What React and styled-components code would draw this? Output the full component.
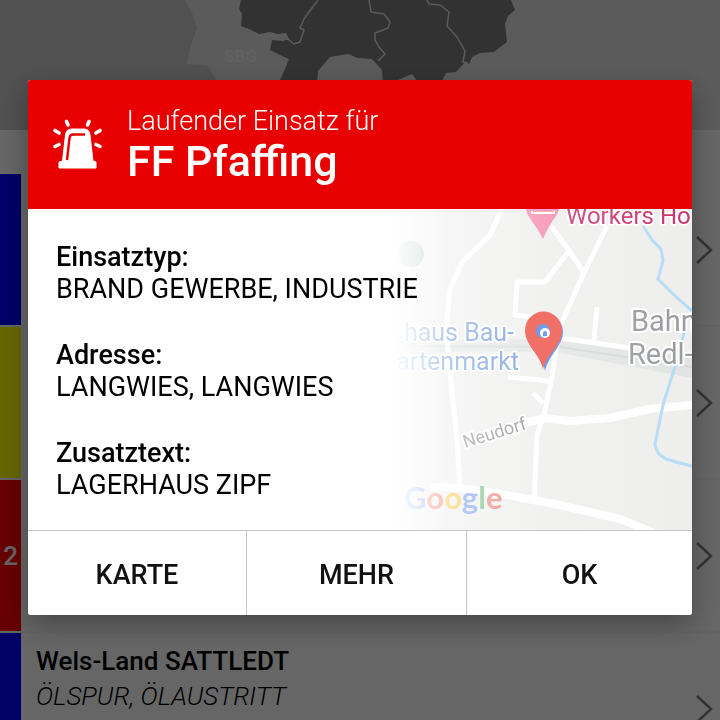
import React from 'react';
import styled, { createGlobalStyle } from 'styled-components';

const GlobalStyle = createGlobalStyle`
    * {
        box-sizing: border-box;
    }

    body {
        margin: 0;
        height: 100vh;
        overflow: hidden;
        background: #ffffff;
        font-family: Roboto, 'Liberation Sans', sans-serif;
    }
`;

const Page = styled.div`
    min-height: 100vh;
`;

const StateMapArea = styled.div`
    height: 130px;
    background: #e3e3e3;
    overflow: hidden;
`;

const StateMapSvg = styled.svg`
    display: block;
    width: 100%;
    height: 130px;
`;

const MissionList = styled.ul`
    list-style: none;
    margin: 0;
    padding: 44px 0 0;
`;

const MissionRow = styled.li`
    display: flex;
    align-items: stretch;
    height: 153px;
    border-bottom: 2px solid #f8f8f8;
`;

const Level = styled.div`
    width: 21px;
    flex-shrink: 0;
    display: flex;
    align-items: center;
    justify-content: flex-end;
    padding-right: 3px;
    background: ${props => props.$color};
    color: #ffffff;
    font-size: 26px;
    font-weight: 500;
`;

const MissionText = styled.div`
    flex: 1;
    padding: 11px 0 0 15px;
    font-size: 26px;
    line-height: 35px;
    color: #000000;
    white-space: nowrap;
    overflow: hidden;
`;

const MissionTitle = styled.div`
    font-weight: 500;
`;

const MissionType = styled.div`
    font-weight: 300;
    font-style: italic;
`;

const Chevron = styled.svg`
    width: 18px;
    height: 30px;
    align-self: center;
    margin-right: 7px;
    flex-shrink: 0;
`;

const Scrim = styled.div`
    position: fixed;
    inset: 0;
    display: flex;
    justify-content: center;
    align-items: flex-start;
    padding: 80px 28px 0;
    background: rgba(0, 0, 0, 0.6);
`;

const Dialog = styled.div`
    width: 100%;
    border-radius: 3px;
    overflow: hidden;
    background: #ffffff;
    box-shadow: 0 10px 28px rgba(0, 0, 0, 0.32);
`;

const DialogHeader = styled.header`
    display: flex;
    align-items: center;
    gap: 24px;
    height: 129px;
    padding: 0 24px;
    background: #e80000;
    color: #ffffff;
`;

const SirenSvg = styled.svg`
    width: 51px;
    height: 51px;
    flex-shrink: 0;
`;

const Subtitle = styled.div`
    font-size: 27px;
    font-weight: 300;
    line-height: 32px;
`;

const Title = styled.h1`
    margin: 0;
    font-size: 43px;
    font-weight: 500;
    line-height: 48px;
`;

const DialogBody = styled.div`
    display: grid;
    height: 321px;
`;

const LocationMap = styled.svg`
    grid-area: 1 / 1;
    justify-self: end;
    width: 302px;
    height: 321px;
    font-family: Roboto, sans-serif;
`;

const Details = styled.dl`
    grid-area: 1 / 1;
    z-index: 1;
    margin: 0;
    padding: 32px 28px;
    font-size: 27px;
    line-height: 32px;
    color: #000000;
`;

const Label = styled.dt`
    font-weight: 500;
`;

const Value = styled.dd`
    margin: 0 0 34px;
`;

const Actions = styled.div`
    display: grid;
    grid-template-columns: 218fr 220fr 226fr;
    border-top: 1px solid #c6c6c6;
`;

const ActionButton = styled.button`
    height: 84px;
    padding: 4px 0 0;
    border: 0;
    border-left: ${props => (props.$first ? '0' : '1px solid #c6c6c6')};
    background: #ffffff;
    color: #111111;
    font-family: inherit;
    font-size: 27px;
    font-weight: 500;
    cursor: pointer;
`;

const missions = [
    { color: '#0000ff' },
    { color: '#ffff00' },
    { color: '#ff0000', level: '2' },
    { color: '#0000ff', title: 'Wels-Land SATTLEDT', type: 'ÖLSPUR, ÖLAUSTRITT' },
];

const details = [
    { label: 'Einsatztyp:', value: 'BRAND GEWERBE, INDUSTRIE' },
    { label: 'Adresse:', value: 'LANGWIES, LANGWIES' },
    { label: 'Zusatztext:', value: 'LAGERHAUS ZIPF' },
];

const actions = ['KARTE', 'MEHR', 'OK'];

function StateMap() {
    return (
        <StateMapSvg viewBox="0 0 720 130" preserveAspectRatio="xMidYMid slice" aria-hidden="true">
            <path d="M0 0H185L192 13L197 28L190 48L187 64L207 65L216 79L219 130H0Z" fill="#cacaca" />
            <text x="224" y="62" fontSize="17" fontWeight="700" fill="#f0f0f0">SBG</text>
            <path
                d="M241 0L239 9L242 14L241 26L249 29L259 34L270 32L278 34L286 33L289 39L283 41L272 40L270 50L280 55L289 59L285 69L280 80L275 100H316L318 71L330 57L348 54L358 58L372 59L382 70L384 100L398 80L412 74L418 82L424 100L443 79L446 73L456 72L466 61L469 64L472 57L480 53L494 52L507 42L505 24L508 16L515 10L511 0Z"
                fill="#7e7e7e"
            />
            <g fill="none" stroke="#e3e3e3" strokeWidth="1.5" strokeLinejoin="round">
                <path d="M278 35L289 40L294 44L300 42L304 30L300 28L304 19L309 12L318 0" />
                <path d="M369 0L371 12L384 14L390 22L388 28L375 33L375 40L379 47L385 54L378 61" />
                <path d="M427 0L429 4L440 5L449 12L447 26L457 37L465 51L463 62L467 64" />
            </g>
        </StateMapSvg>
    );
}

function Siren() {
    return (
        <SirenSvg viewBox="0 0 51 51" aria-hidden="true">
            <g stroke="#ffffff" strokeWidth="3.6" strokeLinecap="round">
                <path d="M14.500 2.500L16 6M37 2.500L35.500 6M3 11.500L7 14M48 11.500L44 14M3 27.500L7 25.500M48 27.500L44 25.500" />
            </g>
            <path
                d="M7 43L10.500 42L13.500 16Q14 10 20 10H32Q37.500 10 38 16L41 42L44 43V49H7Z"
                fill="#ffffff"
                stroke="#ffffff"
                strokeLinejoin="round"
            />
            <path d="M15 41L17.500 19Q18 15.500 21 15.500H33" fill="none" stroke="#e80000" strokeWidth="2.4" />
        </SirenSvg>
    );
}

function Map() {
    return (
        <LocationMap viewBox="390 209 302 321" role="img" aria-label="Karte">
            <defs>
                <linearGradient id="fade" x1="0" x2="1">
                    <stop offset="0" stopColor="#ffffff" />
                    <stop offset="0.06" stopColor="#ffffff" stopOpacity="0.88" />
                    <stop offset="0.2" stopColor="#ffffff" stopOpacity="0.5" />
                    <stop offset="0.5" stopColor="#ffffff" stopOpacity="0.2" />
                    <stop offset="1" stopColor="#ffffff" stopOpacity="0" />
                </linearGradient>
            </defs>
            <rect x="390" y="209" width="302" height="321" fill="#eeeeed" />
            <path d="M390 340L480 339L560 340L692 357V378L560 353L480 351L390 354Z" fill="#e2e4e4" />
            <path d="M390 346L560 347L692 367" fill="none" stroke="#d6d9d9" strokeWidth="2" />
            <circle cx="411" cy="254" r="13" fill="#a9bdb7" />
            <g fill="none" stroke="#ffffff" strokeWidth="5" strokeLinejoin="round">
                <path d="M502 209L490 235L462 262L450 290L446 330L450 370L457 440L460 488" />
                <path d="M551 226L568 249L584 273" />
                <path d="M607 226L584 273L560 326L552 376L544 415L537 435L534 500" />
                <path d="M568 252L545 282H517L515 315L534 317" />
                <path d="M597 307L594 340M560 338L630 348" />
                <path d="M508 377L550 381M533 393L543 403" />
                <path d="M430 487L460 488L500 494L555 504L620 519L654 533" strokeWidth="8" />
                <path d="M525 423L545 418L570 421L610 418L650 409L692 405" strokeWidth="8" />
            </g>
            <g fill="none" stroke="#b5dcf5" strokeWidth="3">
                <path d="M643 226L652 240L661 249L663 261L658 279L673 294L692 311" />
                <path d="M684 333L680 350L672 376L663 405L655 444Q656 454 666 459Q675 462 692 466" />
            </g>
            <path d="M525 200H560Q560 213 553 220Q547 229 543 239Q538 229 531 220Q525 213 525 200Z" fill="#f58bb0" />
            <path d="M532 211V213H554V211" fill="none" stroke="#ffffff" strokeWidth="2" />
            <g stroke="#ffffff" strokeWidth="4" strokeLinejoin="round" paintOrder="stroke">
                <text x="566" y="224" fontSize="24" fill="#c9306f">Workers Ho</text>
                <g fontSize="25" fill="#6a95da" textAnchor="end">
                    <text x="514" y="341">haus Bau-</text>
                    <text x="519" y="370">artenmarkt</text>
                </g>
                <g fontSize="29" fill="#999b9e">
                    <text x="631" y="331">Bahn</text>
                    <text x="628" y="364">Redl-</text>
                </g>
                <text x="465" y="448" fontSize="18" fill="#8a8a8a" transform="rotate(-17 465 448)">Neudorf</text>
            </g>
            <text x="404" y="509" fontSize="31" fontWeight="700" fontFamily="Lato, sans-serif">
                <tspan fill="#7ba4ee">G</tspan>
                <tspan fill="#ee8279">o</tspan>
                <tspan fill="#f6cb45">o</tspan>
                <tspan fill="#7b9fee">g</tspan>
                <tspan fill="#76bd86">l</tspan>
                <tspan fill="#e8837c">e</tspan>
            </text>
            <rect x="390" y="209" width="302" height="321" fill="url(#fade)" />
            <path d="M545 371C543 354 527 346 527 332A18 18 0 0 1 563 332C563 346 549 354 545 371Z" fill="#6f9be8" />
            <path d="M543 369C540 354 525 346 525 330A18.500 18.500 0 0 1 562 330C562 346 547 354 543 369Z" fill="#f07068" />
            <circle cx="543" cy="331" r="7" fill="#6f9be8" />
            <circle cx="545" cy="333" r="5" fill="#ffffff" />
            <path d="M543 336V333A2 2 0 0 1 547 333V336Z" fill="#6f9be8" />
        </LocationMap>
    );
}

function App() {
    return (
        <Page>
            <GlobalStyle />
            <StateMapArea>
                <StateMap />
            </StateMapArea>
            <MissionList>
                {missions.map((mission, index) => (
                    <MissionRow key={index}>
                        <Level $color={mission.color}>{mission.level}</Level>
                        <MissionText>
                            <MissionTitle>{mission.title}</MissionTitle>
                            <MissionType>{mission.type}</MissionType>
                        </MissionText>
                        <Chevron viewBox="0 0 18 30" aria-hidden="true">
                            <path d="M2 2L16 15L2 28" fill="none" stroke="#808080" strokeWidth="2.5" />
                        </Chevron>
                    </MissionRow>
                ))}
            </MissionList>
            <Scrim>
                <Dialog role="dialog" aria-modal="true" aria-labelledby="dialog-title">
                    <DialogHeader>
                        <Siren />
                        <div>
                            <Subtitle>Laufender Einsatz für</Subtitle>
                            <Title id="dialog-title">FF Pfaffing</Title>
                        </div>
                    </DialogHeader>
                    <DialogBody>
                        <Map />
                        <Details>
                            {details.map(item => (
                                <React.Fragment key={item.label}>
                                    <Label>{item.label}</Label>
                                    <Value>{item.value}</Value>
                                </React.Fragment>
                            ))}
                        </Details>
                    </DialogBody>
                    <Actions>
                        {actions.map((action, index) => (
                            <ActionButton key={action} type="button" $first={index === 0}>
                                {action}
                            </ActionButton>
                        ))}
                    </Actions>
                </Dialog>
            </Scrim>
        </Page>
    );
}

export default App;
